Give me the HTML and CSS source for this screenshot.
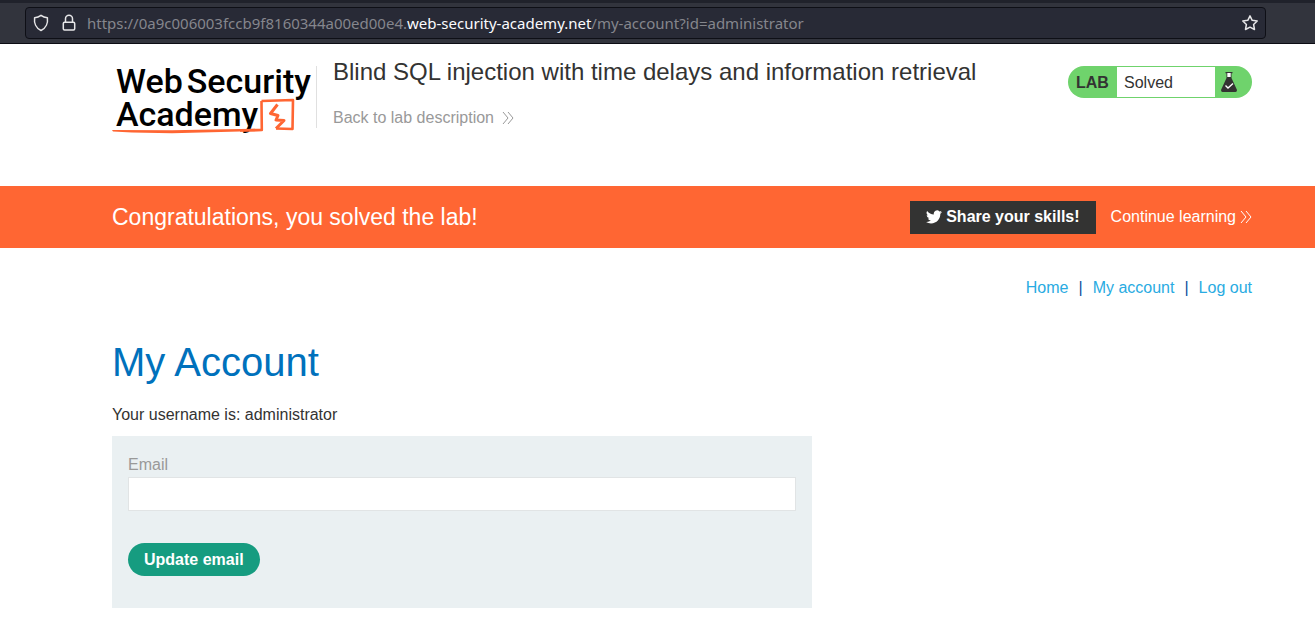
FILE: index.html
```html
<!DOCTYPE html>
<html lang="en">
<head>
<meta charset="utf-8">
<title>Blind SQL injection with time delays and information retrieval</title>
<link rel="stylesheet" href="styles.css">
</head>
<body>
<div class="toolbar">
  <div class="address">
    <svg class="tool-icon" width="16" height="18" viewBox="0 0 16 18"><path d="M8 1.3C6.3 2.6 4 3.5 1.6 3.7C.9 9 3 14.300 8 16.500C13 14.300 15.100 9 14.400 3.700C12 3.500 9.700 2.600 8 1.300Z"/></svg>
    <svg class="tool-icon lock" width="14" height="18" viewBox="0 0 14 18"><rect x="1.300" y="8.200" width="11.400" height="7.800" rx="1.200"/><path d="M3.500 8V4.800a3.500 3.500 0 0 1 7 0V8"/></svg>
    <p class="url">https://0a9c006003fccb9f8160344a00ed00e4.<span class="domain">web-security-academy.net</span>/my-account?id=administrator</p>
    <button class="bookmark" type="button" aria-label="Bookmark this page">
      <svg class="tool-icon" width="18" height="18" viewBox="0 0 18 18"><path d="M9 1.800L11.200 6.300L16.200 7L12.600 10.500L13.500 15.500L9 13.200L4.500 15.500L5.400 10.500L1.800 7L6.800 6.300Z"/></svg>
    </button>
  </div>
</div>
<header class="header">
  <a class="logo" href="#" aria-label="Web Security Academy">
    <span class="logo-line"><span>Web</span><span>Security</span></span>
    <span class="logo-line">Academy</span>
    <svg class="logo-art" width="184" height="38" viewBox="0 0 184 38"><path class="stroke" d="M149.500 3L181 2L180.500 31L164 30.500M149.500 3L149.800 32L128 32.500"/><path class="stroke bolt" d="M165.500 6.500L158.500 15.500L166 17.500L164 22L172 22.500L164 30.500"/><path class="fill" d="M0 32L60 32.200L128 31L150 30.800V33L128 33.500L60 35.200L20 34.500L1 33.500Z"/></svg>
  </a>
  <div class="heading">
    <h2 class="title">Blind SQL injection with time delays and information retrieval</h2>
    <a class="back" href="#">Back to lab description
      <svg class="chevrons" width="12" height="14" viewBox="0 0 12 14"><path d="M1 1L6 7L1 13M6 1L11 7L6 13"/></svg>
    </a>
  </div>
  <div class="status">
    <span class="status-lab">LAB</span>
    <span class="status-text">Solved</span>
    <svg class="flask" width="16" height="22" viewBox="0 0 16 22"><path d="M4.500 1H11.500V2.200H10.500V7L16 19Q16 21 14.500 21H1.500Q0 21 0 19L5.500 7V2.200H4.500Z" fill="#333332"/><path d="M6.300 2H9.700V6H6.300Z" fill="#fff"/><path d="M4.500 14.500L7 17L12 12.500" fill="none" stroke="#fff" stroke-width="1.400"/></svg>
  </div>
</header>
<section class="banner">
  <h4 class="banner-text">Congratulations, you solved the lab!</h4>
  <button class="share" type="button">
    <svg width="16" height="14" viewBox="0 0 24 20"><path fill="#fff" d="M24 2.400a10 10 0 0 1-2.800.8A5 5 0 0 0 23.300.500a10 10 0 0 1-3.100 1.200A4.900 4.900 0 0 0 11.800 6.200 14 14 0 0 1 1.700 1a4.900 4.900 0 0 0 1.500 6.600A5 5 0 0 1 1 7v.1A4.900 4.900 0 0 0 4.900 11.900a5 5 0 0 1-2.200.1 4.900 4.900 0 0 0 4.600 3.400A10 10 0 0 1 0 17.500a14 14 0 0 0 7.500 2.200c9.100 0 14.300-7.700 14-14.700A10 10 0 0 0 24 2.400Z"/></svg>
    Share your skills!
  </button>
  <a class="continue" href="#">Continue learning
    <svg class="chevrons" width="12" height="14" viewBox="0 0 12 14"><path d="M1 1L6 7L1 13M6 1L11 7L6 13"/></svg>
  </a>
</section>
<main class="main">
  <nav class="nav">
    <a href="#">Home</a><span>|</span><a href="#">My account</a><span>|</span><a href="#">Log out</a>
  </nav>
  <h1 class="page-title">My Account</h1>
  <p class="username">Your username is: administrator</p>
  <form class="form">
    <label class="label" for="email">Email</label>
    <input class="field" id="email" type="email" name="email">
    <button class="update" type="button">Update email</button>
  </form>
</main>
</body>
</html>
```
FILE: styles.css
```css
* {
  box-sizing: border-box;
}
body {
  margin: 0;
  background: #fff;
  color: #333332;
  font: 16px/20px "Liberation Sans", Arial, sans-serif;
}
h1, h2, h4, p {
  margin: 0;
  font-weight: 400;
}
a {
  text-decoration: none;
}
button {
  font: inherit;
  cursor: pointer;
}
.toolbar {
  height: 44px;
  padding: 4px 49px 4px 25px;
  background: #32343d;
  border-top: 3px solid #20222b;
  border-bottom: 1px solid #0c0c14;
}
.address {
  display: flex;
  align-items: center;
  height: 32px;
  padding: 0 6px 0 7px;
  background: #282a36;
  border: 1px solid #0e0f16;
  border-radius: 4px;
}
.tool-icon {
  display: block;
  fill: none;
  stroke: #e6e6e8;
  stroke-width: 1.5;
  stroke-linejoin: round;
}
.lock {
  margin-left: 13px;
}
.url {
  flex: 1;
  margin-left: 11px;
  color: #85868d;
  font: 15px/20px "Noto Sans", sans-serif;
  white-space: nowrap;
}
.domain {
  color: #fbfbfe;
}
.bookmark {
  padding: 0;
  background: none;
  border: 0;
}
.header {
  display: flex;
  align-items: flex-start;
  height: 142px;
  padding: 14px 63px 0 112px;
}
.logo {
  position: relative;
  width: 204px;
  padding: 7px 0 0 4px;
  color: #000;
  font: 500 34px/33px Roboto, sans-serif;
}
.logo-line {
  display: flex;
  gap: 4px;
}
.logo-art {
  position: absolute;
  left: 0;
  bottom: -5px;
}
.stroke {
  fill: none;
  stroke: #ff6633;
  stroke-width: 2.6;
  stroke-linejoin: round;
}
.bolt {
  stroke-width: 3;
}
.fill {
  fill: #ff6633;
}
.heading {
  flex: 1;
  height: 62px;
  margin-top: 8px;
  padding-left: 16px;
  border-left: 1px solid #e0e0e0;
}
.title {
  font-size: 24px;
  line-height: 28px;
  margin-top: -8px;
}
.back {
  display: flex;
  align-items: center;
  gap: 8px;
  margin-top: 22px;
  color: #999;
}
.chevrons {
  fill: none;
  stroke: currentColor;
}
.status {
  display: flex;
  align-items: center;
  width: 184px;
  height: 32px;
  margin-top: 8px;
  padding: 1px 15px 1px 8px;
  background: #6fd36c;
  border-radius: 16px;
}
.status-lab {
  width: 41px;
  padding-top: 2px;
  font-weight: 700;
}
.status-text {
  flex: 1;
  margin-right: 6px;
  padding: 1px 0 0 7px;
  background: #fff;
  line-height: 29px;
}
.banner {
  display: flex;
  align-items: center;
  height: 62px;
  padding: 0 63px 0 112px;
  background: #ff6633;
  color: #fff;
}
.banner-text {
  flex: 1;
  font-size: 23px;
  line-height: 28px;
}
.share {
  display: flex;
  align-items: center;
  gap: 4px;
  height: 33px;
  padding: 0 16px;
  background: #333332;
  border: 0;
  color: #fff;
  font-weight: 700;
}
.continue {
  display: flex;
  align-items: center;
  gap: 4px;
  margin-left: 15px;
  color: #fff;
}
.main {
  padding: 30px 63px 28px 112px;
}
.nav {
  display: flex;
  justify-content: flex-end;
  gap: 10px;
}
.nav a {
  color: #29abe2;
}
.nav span {
  color: #0d4f9e;
}
.page-title {
  margin-top: 41px;
  color: #0071bc;
  font-size: 40px;
  line-height: 46px;
}
.username {
  margin-top: 20px;
}
.form {
  max-width: 700px;
  margin-top: 11px;
  padding: 19px 16px 32px;
  background: #eaf0f2;
}
.label {
  display: block;
  color: #999;
}
.field {
  display: block;
  width: 100%;
  height: 34px;
  margin: 2px 0 32px;
  padding: 0 8px;
  background: #fff;
  border: 1px solid #e1e4e5;
  font: inherit;
}
.update {
  height: 33px;
  display: block;
  padding: 0 16px;
  background: #169c80;
  border: 0;
  border-radius: 17px;
  color: #fff;
  font-weight: 700;
}
```
